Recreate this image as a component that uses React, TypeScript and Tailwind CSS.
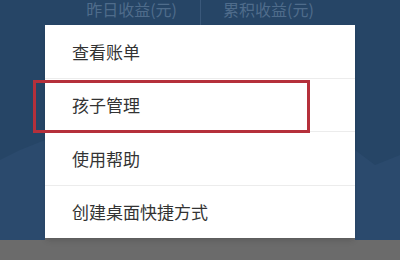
const items = ["查看账单", "孩子管理", "使用帮助", "创建桌面快捷方式"]

export default function App() {
  return (
    <div
      className="relative w-[400px] h-[260px] overflow-hidden bg-[#264566]"
      style={{ fontFamily: '"Noto Sans CJK SC", "Noto Sans", sans-serif' }}
    >
      {/* faint mountains in the background */}
      <svg className="absolute left-0 top-[120px]" width="400" height="120" viewBox="0 0 400 120">
        <path d="M0 40 L20 30 L45 20 L45 120 L0 120 Z" fill="#2b4a6d" />
        <path d="M355 30 L375 45 L400 35 L400 120 L355 120 Z" fill="#2b4a6d" />
      </svg>

      <div className="relative flex h-[25px]">
        <div className="flex flex-1 justify-end pr-[23px] pt-[1px] text-[16px] leading-[16px] text-[#4f6c8b]">昨日收益(元)</div>
        <div className="w-px h-[25px] bg-[#3a587a]" />
        <div className="flex flex-1 justify-start pl-[22px] pt-[1px] text-[16px] leading-[16px] text-[#4f6c8b]">累积收益(元)</div>
      </div>

      <div className="relative mx-[45px] h-[213px] bg-white shadow-md flex flex-col">
        {items.map((t, i) => (
          <div
            key={t}
            className={`flex flex-1 items-center pl-[27px] text-[17px] text-[#333] ${i < items.length - 1 ? "border-b border-[#ececec]" : ""}`}
          >
            {t}
          </div>
        ))}
      </div>

      <div className="h-[22px] bg-[#6b6b6b]" />

      <div className="absolute left-[33px] top-[80px] w-[277px] h-[53px] border-[3px] border-[#b5303b]" />
    </div>
  )
}
